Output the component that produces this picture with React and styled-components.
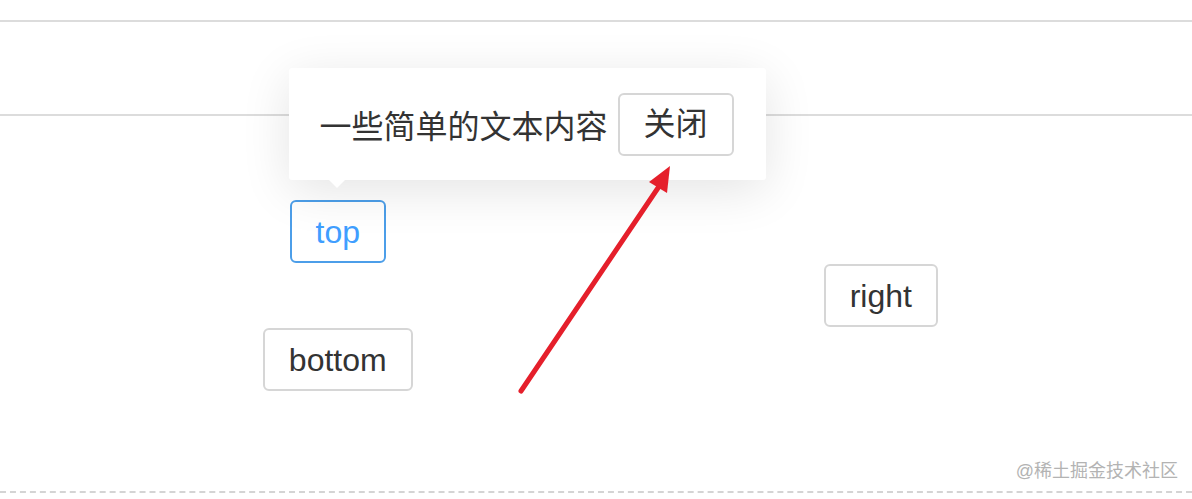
import React from 'react'
import styled, {createGlobalStyle, css} from 'styled-components'

const GlobalStyle = createGlobalStyle`
  html, body {
    margin: 0;
    padding: 0;
    background: #fff;
    font-family: "Liberation Sans", "Noto Sans CJK SC", sans-serif;
    color: #333;
  }
`

const Page = styled.div`
  position: relative;
  width: 1192px;
  height: 499px;
  overflow: hidden;
  display: flex;
  flex-direction: column;
`

const Rule = styled.div`
  height: ${p => p.h}px;
  border-bottom: 2px solid #dcdcdc;
  box-sizing: border-box;
`

const Stage = styled.div`
  display: grid;
  grid-template-columns: repeat(3, 271.5px);
  grid-template-rows: repeat(3, 64px);
  padding: 84px 0 0 202px;
  justify-items: center;
  align-items: start;
`

const Cell = styled.div`
  position: relative;
  grid-column: ${p => p.col};
  grid-row: ${p => p.row};
`

const Button = styled.button`
  box-sizing: border-box;
  height: 63px;
  padding: 0 24px;
  font-family: inherit;
  font-size: 32px;
  line-height: 1;
  background: #fff;
  color: #333;
  border: 2px solid #d6d6d6;
  border-radius: 6px;
  cursor: pointer;
  ${p => p.active && css`
    color: #409eff;
    border-color: #4c9ee9;
  `}
`

const Popover = styled.div`
  position: absolute;
  left: -1px;
  bottom: calc(100% + 20px);
  display: flex;
  align-items: center;
  gap: 10px;
  box-sizing: border-box;
  width: 477px;
  height: 112px;
  padding: 0 31px;
  background: #fff;
  border-radius: 3px;
  box-shadow: 0 10px 50px rgba(0, 0, 0, 0.11);
  font-size: 32px;
  white-space: nowrap;
  z-index: 2;

  &::after {
    content: "";
    position: absolute;
    left: 40px;
    bottom: -8px;
    border-left: 8px solid transparent;
    border-right: 8px solid transparent;
    border-top: 8px solid #fff;
  }
`

const Footer = styled.div`
  margin-top: auto;
  display: flex;
  justify-content: flex-end;
  padding: 0 14px 9px 0;
  border-bottom: 2px dashed #d4d4d4;
  margin-bottom: 6px;
`

const Watermark = styled.span`
  font-size: 18px;
  color: #b3b3b3;
`

const Annotation = styled.svg`
  position: absolute;
  left: 0;
  top: 0;
  pointer-events: none;
  z-index: 3;
`

export default function App() {
  return (
    <>
      <GlobalStyle />
      <Page>
        <Rule h={22} />
        <Rule h={94} />
        <Stage>
          <Cell col={1} row={1}>
            <Popover>
              <span>一些简单的文本内容</span>
              <Button>关闭</Button>
            </Popover>
            <Button active>top</Button>
          </Cell>
          <Cell col={3} row={2}>
            <Button>right</Button>
          </Cell>
          <Cell col={1} row={3}>
            <Button>bottom</Button>
          </Cell>
        </Stage>
        <Footer>
          <Watermark>@稀土掘金技术社区</Watermark>
        </Footer>
        <Annotation width="1192" height="499">
          <line x1="521" y1="391" x2="662" y2="182" stroke="#e51f2b" strokeWidth="5" strokeLinecap="round" />
          <polygon points="670,166 649,182 667,193" fill="#e51f2b" />
        </Annotation>
      </Page>
    </>
  )
}
